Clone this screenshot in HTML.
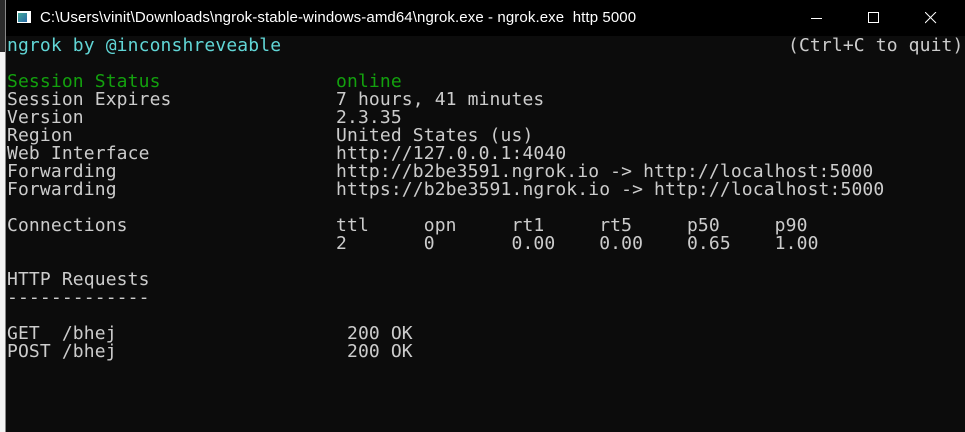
<!DOCTYPE html>
<html><head><meta charset="utf-8"><style>
html,body{margin:0;padding:0;width:965px;height:432px;overflow:hidden;background:#0c0c0c;}
#left{position:absolute;left:0;top:0;width:5px;height:432px;background:#f4f4f4;border-right:1px solid #888;}
#left .top{position:absolute;left:0;top:0;width:5px;height:52px;background:#2b2b2b;}
#title{position:absolute;left:6px;top:0;width:959px;height:36px;background:#000;color:#fff;font:15px "Liberation Sans",sans-serif;}
#title .t{position:absolute;left:34px;top:9px;letter-spacing:0.1px;}
#icon{position:absolute;left:11px;top:11px;width:14px;height:12px;background:#fff;}
#icon i{position:absolute;left:1px;top:2px;width:9px;height:9px;background:linear-gradient(135deg,#4a9,#2a6aa8);}
#term{position:absolute;left:6px;top:36px;width:959px;height:396px;background:#0c0c0c;}
pre{margin:0;position:absolute;left:1px;top:1px;font:18px/18px "DejaVu Sans Mono",monospace;letter-spacing:0.13px;color:#cccccc;}
.c{color:#61d6d6}.g{color:#13a10e}
.ctl{position:absolute;stroke:#fff;stroke-width:1;fill:none}
</style></head><body>
<div id="left"><div class="top"></div></div>
<div id="title"><div id="icon"><i></i></div><span class="t">C:\Users\vinit\Downloads\ngrok-stable-windows-amd64\ngrok.exe - ngrok.exe&nbsp; http 5000</span>
<svg class="ctl" style="left:805px;top:12px" width="12" height="12"><line x1="0" y1="6.5" x2="11" y2="6.5"/></svg>
<svg class="ctl" style="left:862px;top:12px" width="12" height="12"><rect x="0.5" y="0.5" width="10" height="10"/></svg>
<svg class="ctl" style="left:919px;top:12px" width="12" height="12"><line x1="0" y1="0" x2="11" y2="11"/><line x1="11" y1="0" x2="0" y2="11"/></svg>
</div>
<div id="term"><pre style="left:782px">(Ctrl+C to quit)</pre><pre><span class="c">ngrok by @inconshreveable</span>

<span class="g">Session Status                online</span>
Session Expires               7 hours, 41 minutes
Version                       2.3.35
Region                        United States (us)
Web Interface                 http://127.0.0.1:4040
Forwarding                    http://b2be3591.ngrok.io -> http://localhost:5000
Forwarding                    https://b2be3591.ngrok.io -> http://localhost:5000

Connections                   ttl     opn     rt1     rt5     p50     p90
                              2       0       0.00    0.00    0.65    1.00

HTTP Requests
-------------

GET  /bhej                     200 OK
POST /bhej                     200 OK
</pre></div>
</body></html>
